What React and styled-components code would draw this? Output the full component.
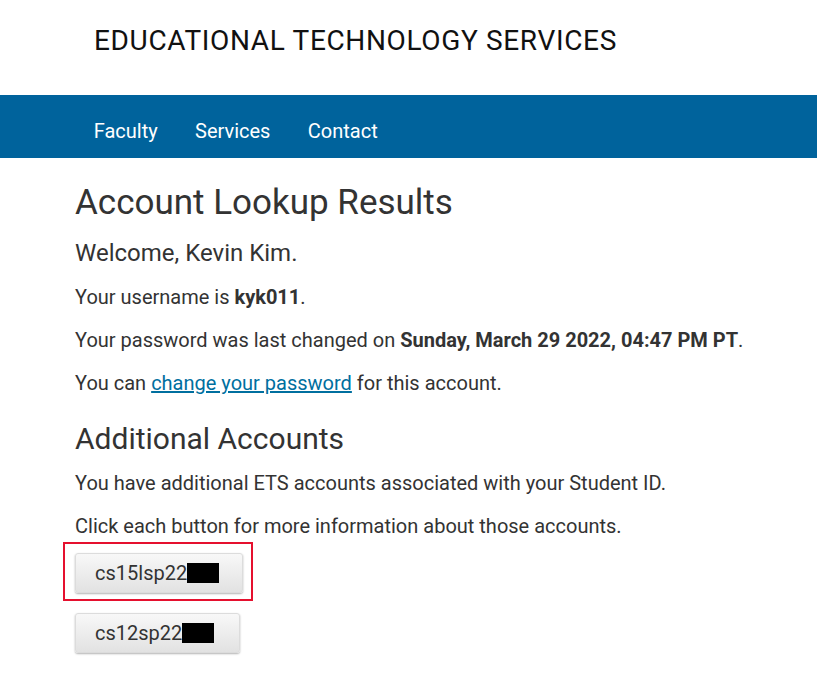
import React from 'react';
import styled, { createGlobalStyle } from 'styled-components';

const GlobalStyle = createGlobalStyle`
  html, body {
    margin: 0;
    padding: 0;
    background: #fff;
  }
  body {
    font-family: Roboto, "Liberation Sans", Arial, sans-serif;
    color: #333;
  }
`;

const Page = styled.div`
  width: 817px;
  min-height: 673px;
  background: #fff;
`;

const Masthead = styled.header`
  height: 95px;
  box-sizing: border-box;
  padding: 24px 0 0 94px;
`;

const SiteTitle = styled.div`
  font-size: 28px;
  line-height: 1.2;
  letter-spacing: 0.65px;
  color: #111;
`;

const NavBar = styled.nav`
  height: 63px;
  box-sizing: border-box;
  background: #00639c;
  display: flex;
  padding: 24px 0 0 75px;
`;

const NavLink = styled.a`
  color: #fff;
  font-size: 20px;
  line-height: 24px;
  padding: 0 18.7px;
  text-decoration: none;
  cursor: pointer;
`;

const Main = styled.main`
  padding: 26px 0 20px 75px;
  display: flex;
  flex-direction: column;
  align-items: flex-start;
`;

const Title = styled.h1`
  margin: 0;
  font-size: 35px;
  line-height: 1.1;
  font-weight: 400;
  color: #333;
`;

const Welcome = styled.h3`
  margin: 16px 0 17px;
  font-size: 24px;
  line-height: 1.2;
  font-weight: 400;
  color: #333;
`;

const SubTitle = styled.h2`
  margin: 25px 0 15px;
  font-size: 30px;
  line-height: 1.1;
  font-weight: 400;
  color: #333;
`;

const Para = styled.p`
  margin: 0;
  font-size: 20px;
  line-height: 27px;
  & + & {
    margin-top: 16px;
  }
`;

const Strong = styled.strong`
  font-weight: 700;
`;

const TextLink = styled.a`
  color: #006f9f;
  text-decoration: underline;
  cursor: pointer;
`;

const Highlight = styled.div`
  margin: 2px 0 12px -12px;
  padding: 9px 8px 6px 10px;
  border: 2px solid #e5102e;
  display: flex;
`;

const AccountButton = styled.button`
  display: flex;
  align-items: center;
  height: 40px;
  box-sizing: border-box;
  padding: 0 ${p => p.$padRight}px 0 19px;
  border: 1px solid #dcdcdc;
  border-radius: 3px;
  background: linear-gradient(#f8f8f8, #e2e2e2);
  box-shadow: 0 1px 2px rgba(0, 0, 0, 0.3);
  font-family: Roboto, "Liberation Sans", Arial, sans-serif;
  font-size: 20px;
  color: #333;
  cursor: pointer;
`;

const Redacted = styled.span`
  display: inline-block;
  width: 32px;
  height: 20px;
  background: #000;
`;

export default function App() {
  return (
    <Page>
      <GlobalStyle />
      <Masthead>
        <SiteTitle>EDUCATIONAL TECHNOLOGY SERVICES</SiteTitle>
      </Masthead>
      <NavBar>
        <NavLink>Faculty</NavLink>
        <NavLink>Services</NavLink>
        <NavLink>Contact</NavLink>
      </NavBar>
      <Main>
        <Title>Account Lookup Results</Title>
        <Welcome>Welcome, Kevin Kim.</Welcome>
        <Para>Your username is <Strong>kyk011</Strong>.</Para>
        <Para>Your password was last changed on <Strong>Sunday, March 29 2022, 04:47 PM PT</Strong>.</Para>
        <Para>You can <TextLink>change your password</TextLink> for this account.</Para>
        <SubTitle>Additional Accounts</SubTitle>
        <Para>You have additional ETS accounts associated with your Student ID.</Para>
        <Para>Click each button for more information about those accounts.</Para>
        <Highlight>
          <AccountButton $padRight={23}>cs15lsp22<Redacted /></AccountButton>
        </Highlight>
        <AccountButton $padRight={25}>cs12sp22<Redacted /></AccountButton>
      </Main>
    </Page>
  );
}
